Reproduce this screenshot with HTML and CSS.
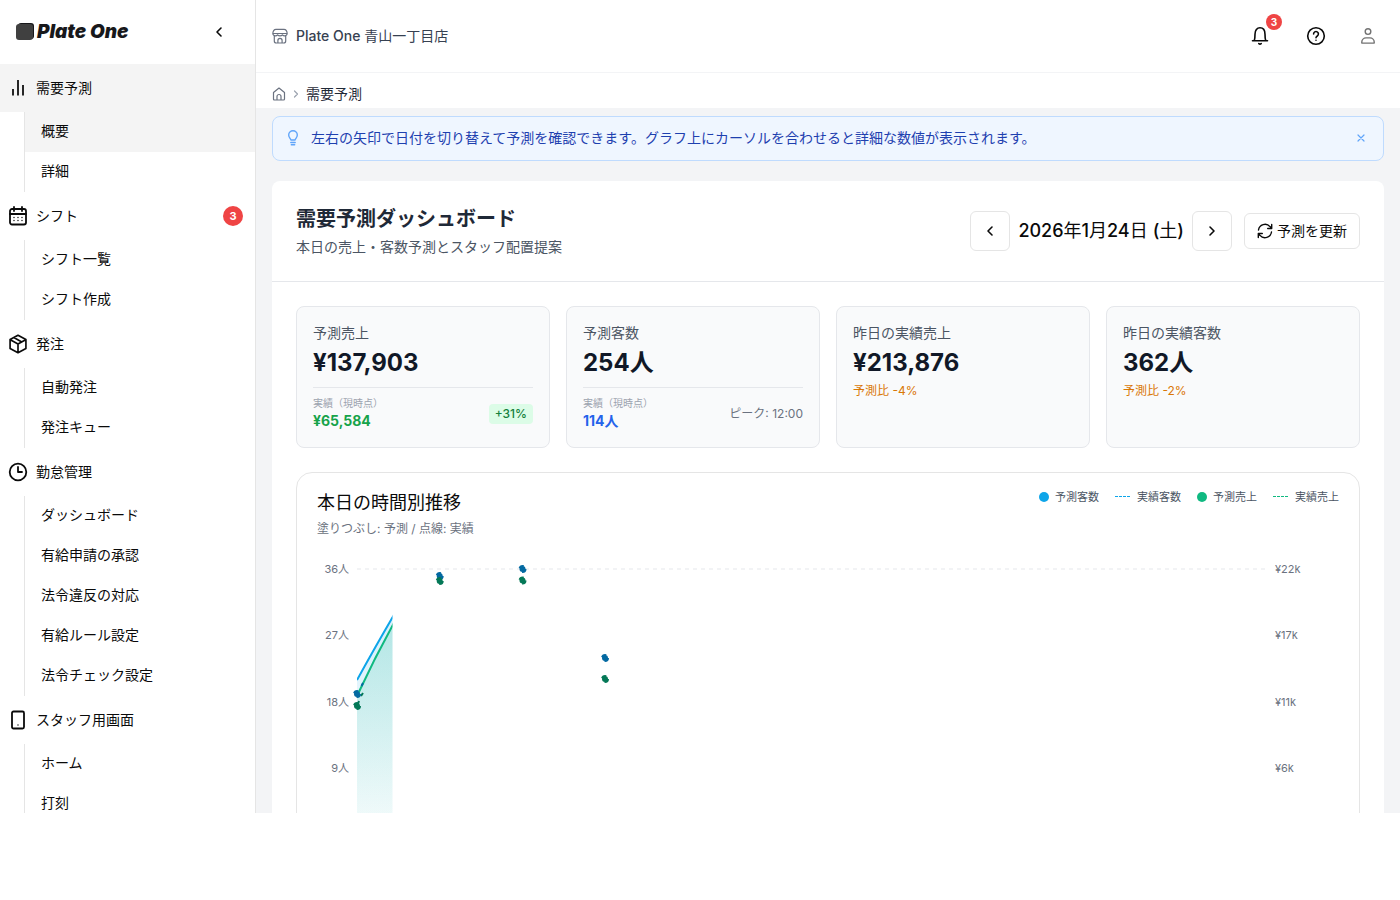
FILE: index.html
```html
<!DOCTYPE html>
<html lang="ja">
<head>
    <meta charset="UTF-8">
    <meta name="viewport" content="width=device-width, initial-scale=1.0">
    <title>需要予測 | Plate One</title>
    <link rel="stylesheet" href="styles.css">
</head>
<body>
<div class="app">
    <aside class="sidebar">
        <div class="sidebar-header">
            <a class="logo" href="#">
                <svg width="19" height="18" viewBox="0 0 19 18" aria-hidden="true">
                    <rect x="2" y="0" width="16" height="16" rx="3" fill="#18181b"/>
                    <rect x="0" y="1" width="17" height="16" rx="3" fill="#404040"/>
                </svg>
                <span>Plate One</span>
            </a>
            <button class="collapse" type="button" aria-label="メニューを閉じる">
                <svg class="icon" width="16" height="16" viewBox="0 0 16 16"><path d="M10 4 6 8l4 4"/></svg>
            </button>
        </div>
        <nav class="nav">
            <a class="nav-item active" href="#">
                <svg class="icon bars" width="20" height="20" viewBox="0 0 20 20"><path d="M5 11v6.500M10 2v15.500M15 7v10.500"/></svg>
                <span>需要予測</span>
            </a>
            <div class="nav-sub">
                <a class="active" href="#">概要</a>
                <a href="#">詳細</a>
            </div>
            <a class="nav-item" href="#">
                <svg class="icon" width="20" height="20" viewBox="0 0 20 20"><rect x="2" y="3" width="16" height="15.500" rx="2"/><path d="M2 8h16M6 1v4M14 1v4"/><path class="dots" d="M6 11.500h0M10 11.500h0M14 11.500h0M6 14.500h0M10 14.500h0M14 14.500h0"/></svg>
                <span>シフト</span>
                <span class="count">3</span>
            </a>
            <div class="nav-sub">
                <a href="#">シフト一覧</a>
                <a href="#">シフト作成</a>
            </div>
            <a class="nav-item" href="#">
                <svg class="icon box" width="20" height="20" viewBox="0 0 24 24"><path d="M12 1.500 21.500 6.700v10.600L12 22.500 2.500 17.300V6.700zM2.800 6.900 12 12l9.200-5.100M12 12v10.300M7 4.300l9.500 5.200"/></svg>
                <span>発注</span>
            </a>
            <div class="nav-sub">
                <a href="#">自動発注</a>
                <a href="#">発注キュー</a>
            </div>
            <a class="nav-item" href="#">
                <svg class="icon" width="20" height="20" viewBox="0 0 20 20"><circle cx="10" cy="10" r="8.300"/><path d="M10 5v5h4"/></svg>
                <span>勤怠管理</span>
            </a>
            <div class="nav-sub">
                <a href="#">ダッシュボード</a>
                <a href="#">有給申請の承認</a>
                <a href="#">法令違反の対応</a>
                <a href="#">有給ルール設定</a>
                <a href="#">法令チェック設定</a>
            </div>
            <a class="nav-item" href="#">
                <svg class="icon" width="20" height="20" viewBox="0 0 20 20"><rect x="4" y="1.500" width="12" height="17" rx="1.500"/><path class="dots" d="M10 15h0"/></svg>
                <span>スタッフ用画面</span>
            </a>
            <div class="nav-sub">
                <a href="#">ホーム</a>
                <a href="#">打刻</a>
            </div>
        </nav>
    </aside>

    <div class="content">
        <header class="topbar">
            <div class="store">
                <svg class="icon thin" width="16" height="16" viewBox="0 0 16 16"><path d="M.8 5.500C1 3 2 1.300 4 1.300h8c2 0 3 1.700 3.200 4.200zM.8 5.500q.3 2.300 2.400 2.300 1.700 0 2.400-1 .9 1 2.400 1t2.400-1q.7 1 2.400 1 2.100 0 2.400-2.300M2.300 7.800V13q0 2 2 2h7.400q2 0 2-2V7.800M5.900 15v-2.500a2.100 2.100 0 0 1 4.200 0V15"/></svg>
                <span><b>Plate One</b> 青山一丁目店</span>
            </div>
            <div class="actions">
                <button class="action" type="button" aria-label="通知">
                    <svg class="icon" width="20" height="20" viewBox="0 0 20 20"><path d="M2.500 14.700h15M4.300 14.500c.6-1.800.7-3 .7-6.200C5 4.300 7 1.800 10 1.800s5 2.500 5 6.500c0 3.200.1 4.400.7 6.200M8.800 17.600q1.200 1 2.400 0"/></svg>
                    <span class="action-count">3</span>
                </button>
                <button class="action" type="button" aria-label="ヘルプ">
                    <svg class="icon" width="20" height="20" viewBox="0 0 20 20"><circle cx="10" cy="10" r="8.300"/><path d="M7.600 8a2.400 2.400 0 1 1 3.700 2c-.9.600-1.300 1-1.300 1.700M10 14.200h0"/></svg>
                </button>
                <button class="action user" type="button" aria-label="アカウント">
                    <svg class="icon medium" width="20" height="20" viewBox="0 0 20 20"><circle cx="10" cy="5.600" r="2.800"/><path d="M3.800 17.100v-1a4.200 4.200 0 0 1 4.200-4.200h4a4.200 4.200 0 0 1 4.200 4.200v1z"/></svg>
                </button>
            </div>
        </header>
        <nav class="breadcrumb" aria-label="パンくず">
            <a href="#" aria-label="ホーム"><svg class="icon thin" width="14" height="14" viewBox="0 0 14 14"><path d="M1.500 5.500 7 1l5.500 4.500V12q0 1-1 1h-9q-1 0-1-1zM5 13V9.500a2 2 0 0 1 4 0V13"/></svg></a>
            <svg class="icon thin separator" width="12" height="12" viewBox="0 0 12 12"><path d="m4.500 3 3 3-3 3"/></svg>
            <span>需要予測</span>
        </nav>

        <main class="main">
            <div class="notice">
                <svg class="icon medium" width="16" height="16" viewBox="0 0 16 16"><path d="M5.900 10C5.700 8.500 3.700 7.600 3.700 5a4.300 4.300 0 0 1 8.600 0c0 2.600-2 3.500-2.200 5zM5.800 12.500h4.400M6.300 14.700h3.400"/></svg>
                <p>左右の矢印で日付を切り替えて予測を確認できます。グラフ上にカーソルを合わせると詳細な数値が表示されます。</p>
                <button type="button" aria-label="閉じる">
                    <svg class="icon thin" width="12" height="12" viewBox="0 0 12 12"><path d="m3 3 6 6M9 3 3 9"/></svg>
                </button>
            </div>

            <section class="panel">
                <div class="panel-header">
                    <div>
                        <h1>需要予測ダッシュボード</h1>
                        <p>本日の売上・客数予測とスタッフ配置提案</p>
                    </div>
                    <div class="controls">
                        <div class="date-nav">
                            <button class="square" type="button" aria-label="前日">
                                <svg class="icon" width="16" height="16" viewBox="0 0 16 16"><path d="M10 4 6 8l4 4"/></svg>
                            </button>
                            <span class="date"><b>2026</b>年<b>1</b>月<b>24</b>日 <b>(</b>土<b>)</b></span>
                            <button class="square" type="button" aria-label="翌日">
                                <svg class="icon" width="16" height="16" viewBox="0 0 16 16"><path d="m6 4 4 4-4 4"/></svg>
                            </button>
                        </div>
                        <button class="refresh" type="button">
                            <svg class="icon medium" width="16" height="16" viewBox="0 0 16 16"><path d="M1.500 7A6.600 6.600 0 0 1 13 3.600L14.600 5.300M14.700 1.500v4h-4M14.500 9A6.600 6.600 0 0 1 3 12.400L1.400 10.700M1.300 14.500v-4h4"/></svg>
                            予測を更新
                        </button>
                    </div>
                </div>

                <div class="panel-body">
                    <div class="kpis">
                        <div class="kpi">
                            <div class="kpi-label">予測売上</div>
                            <div class="kpi-value">¥137,903</div>
                            <div class="kpi-actual">
                                <div>
                                    <div class="actual-label">実績（現時点）</div>
                                    <div class="actual-value green">¥65,584</div>
                                </div>
                                <span class="tag">+31%</span>
                            </div>
                        </div>
                        <div class="kpi">
                            <div class="kpi-label">予測客数</div>
                            <div class="kpi-value">254人</div>
                            <div class="kpi-actual">
                                <div>
                                    <div class="actual-label">実績（現時点）</div>
                                    <div class="actual-value blue">114人</div>
                                </div>
                                <span class="peak">ピーク: 12:00</span>
                            </div>
                        </div>
                        <div class="kpi">
                            <div class="kpi-label">昨日の実績売上</div>
                            <div class="kpi-value">¥213,876</div>
                            <div class="kpi-diff">予測比 -4%</div>
                        </div>
                        <div class="kpi">
                            <div class="kpi-label">昨日の実績客数</div>
                            <div class="kpi-value">362人</div>
                            <div class="kpi-diff">予測比 -2%</div>
                        </div>
                    </div>

                    <section class="chart-card">
                        <div class="chart-header">
                            <div>
                                <h2>本日の時間別推移</h2>
                                <p>塗りつぶし: 予測 / 点線: 実績</p>
                            </div>
                            <ul class="legend">
                                <li><span class="dot sky"></span>予測客数</li>
                                <li><svg width="16" height="2" viewBox="0 0 16 2"><path d="M0 .5h16" stroke="#0ea5e9" stroke-dasharray="3 1"/></svg>実績客数</li>
                                <li><span class="dot emerald"></span>予測売上</li>
                                <li><svg width="16" height="2" viewBox="0 0 16 2"><path d="M0 .5h16" stroke="#10b981" stroke-dasharray="3 1"/></svg>実績売上</li>
                            </ul>
                        </div>
                        <svg class="chart" viewBox="0 0 1022 320" role="img" aria-label="時間別の客数と売上">
                            <defs>
                                <linearGradient id="fillGuests" gradientUnits="userSpaceOnUse" x1="0" y1="20" x2="0" y2="285">
                                    <stop offset="0" stop-color="#0ea5e9" stop-opacity=".2"/>
                                    <stop offset="1" stop-color="#0ea5e9" stop-opacity=".02"/>
                                </linearGradient>
                                <linearGradient id="fillSales" gradientUnits="userSpaceOnUse" x1="0" y1="20" x2="0" y2="285">
                                    <stop offset="0" stop-color="#10b981" stop-opacity=".22"/>
                                    <stop offset="1" stop-color="#10b981" stop-opacity=".02"/>
                                </linearGradient>
                                <clipPath id="reveal"><rect x="40" y="0" width="35.500" height="320"/></clipPath>
                            </defs>
                            <path class="grid-line" d="M40 20h910"/>
                            <g class="axis" text-anchor="end">
                                <text x="32" y="24">36人</text>
                                <text x="32" y="90">27人</text>
                                <text x="32" y="157">18人</text>
                                <text x="32" y="223">9人</text>
                            </g>
                            <g class="axis">
                                <text x="958" y="24">¥22k</text>
                                <text x="958" y="90">¥17k</text>
                                <text x="958" y="157">¥11k</text>
                                <text x="958" y="223">¥6k</text>
                            </g>
                            <g clip-path="url(#reveal)">
                                <path d="M40 131Q57 100 78 64V285H40z" fill="url(#fillGuests)"/>
                                <path d="M40 131Q57 100 78 64" class="line guests"/>
                                <path d="M40 147Q58 108 78 72V285H40z" fill="url(#fillSales)"/>
                                <path d="M40 147Q58 108 78 72" class="line sales"/>
                            </g>
                            <path class="line guests-dark" d="m44.500 137 1.500-3"/>
                            <path class="line sales-dark" d="m41 155 1-3M44 147l2-3"/>
                            <g class="points guests-dark">
                                <circle cx="40" cy="145" r="3"/>
                                <circle cx="122.700" cy="27" r="3"/>
                                <circle cx="205.500" cy="20" r="3"/>
                                <circle cx="288" cy="109" r="3"/>
                            </g>
                            <g class="points sales-dark">
                                <circle cx="40" cy="157" r="3"/>
                                <circle cx="122.700" cy="32" r="3"/>
                                <circle cx="205.500" cy="31.500" r="3"/>
                                <circle cx="288" cy="130" r="3"/>
                            </g>
                        </svg>
                    </section>
                </div>
            </section>
        </main>
    </div>
</div>
</body>
</html>
```
FILE: styles.css
```css
* {
    box-sizing: border-box;
    margin: 0;
    padding: 0;
}
body {
    height: 100vh;
    padding-bottom: 87px;
    font-family: Inter, "Noto Sans CJK JP", sans-serif;
    font-size: 14px;
    line-height: 20px;
    color: #0a0a0a;
    background-color: #fff;
    overflow: hidden;
}
a {
    color: inherit;
    text-decoration: none;
}
b {
    font-weight: 500;
}
button {
    display: flex;
    align-items: center;
    justify-content: center;
    font: inherit;
    color: inherit;
    background: none;
    border: none;
    cursor: pointer;
}
svg {
    flex-shrink: 0;
    display: block;
}
.icon {
    fill: none;
    stroke: currentColor;
    stroke-width: 1.6;
    stroke-linecap: round;
    stroke-linejoin: round;
}
.icon.medium {
    stroke-width: 1.4;
}
.icon.thin {
    stroke-width: 1.2;
}
.app {
    display: flex;
    height: 100%;
    overflow: hidden;
}

/* Sidebar */
.sidebar {
    display: flex;
    flex-direction: column;
    flex: 0 0 256px;
    border-right: 1px solid #e5e5e5;
    overflow: hidden;
}
.sidebar-header {
    display: flex;
    align-items: center;
    justify-content: space-between;
    flex: 0 0 64px;
    padding: 0 20px 0 16px;
}
.logo {
    display: flex;
    align-items: center;
    gap: 2px;
    font-size: 19px;
    font-weight: 900;
    font-style: italic;
    color: #18181b;
}
.collapse {
    width: 32px;
    height: 32px;
}
.nav {
    flex: 1;
    overflow: hidden;
}
.nav-item {
    display: flex;
    align-items: center;
    gap: 8px;
    height: 48px;
    padding: 0 12px 0 8px;
}
.nav-item .icon {
    stroke-width: 1.8;
}
.nav-item .bars {
    stroke-width: 2;
    stroke-linecap: butt;
    color: #262626;
}
.nav-item .box {
    stroke-width: 2;
}
.nav-item .dots {
    stroke-width: 1.4;
}
.nav-item.active,
.nav-sub .active {
    background-color: #f4f4f4;
}
.count {
    width: 20px;
    height: 20px;
    margin-left: auto;
    border-radius: 50%;
    font-size: 11px;
    font-weight: 700;
    text-align: center;
    color: #fff;
    background-color: #ef4444;
}
.nav-sub {
    margin-left: 24px;
    border-left: 1px solid #e5e5e5;
}
.nav-sub a {
    display: block;
    padding: 9px 16px 11px;
}

/* Header */
.content {
    display: flex;
    flex-direction: column;
    flex: 1;
    min-width: 0;
    background-color: #f3f4f6;
}
.topbar {
    display: flex;
    align-items: center;
    justify-content: space-between;
    flex: 0 0 73px;
    padding: 0 16px;
    border-bottom: 1px solid #f3f4f6;
    background-color: #fff;
}
.store {
    display: flex;
    align-items: center;
    gap: 8px;
    color: #374151;
}
.store .icon {
    color: #6b7280;
}
.actions {
    display: flex;
    gap: 16px;
}
.action {
    position: relative;
    width: 40px;
    height: 40px;
}
.action.user {
    width: 32px;
    color: #737373;
}
.action-count {
    position: absolute;
    top: -2px;
    right: -2px;
    width: 16px;
    height: 16px;
    border-radius: 50%;
    font-size: 10px;
    line-height: 16px;
    font-weight: 700;
    color: #fff;
    background-color: #ef4444;
}
.breadcrumb {
    display: flex;
    align-items: center;
    gap: 4px;
    flex: 0 0 35px;
    padding: 6px 16px 0;
    color: #1f2937;
    background-color: #fff;
}
.breadcrumb a {
    color: #6b7280;
}
.separator {
    color: #9ca3af;
}

/* Main */
.main {
    flex: 1;
    padding: 8px 16px;
    overflow: hidden;
}
.notice {
    display: flex;
    align-items: center;
    gap: 10px;
    margin-bottom: 20px;
    padding: 10px 16px 12px 12px;
    border: 1px solid #bfdbfe;
    border-radius: 8px;
    line-height: 21px;
    color: #1e40af;
    background-color: #eff6ff;
}
.notice p {
    flex: 1;
}
.notice .icon {
    color: #60a5fa;
}
.panel {
    border-radius: 8px;
    background-color: #fff;
}
.panel-header {
    display: flex;
    align-items: center;
    justify-content: space-between;
    padding: 24px;
    border-bottom: 1px solid #e5e7eb;
}
.panel-header h1 {
    font-size: 20px;
    line-height: 28px;
    font-weight: 700;
    color: #1f2937;
}
.panel-header p {
    margin-top: 4px;
    color: #4b5563;
}
.controls {
    display: flex;
    align-items: center;
    gap: 12px;
}
.date-nav {
    display: flex;
    align-items: center;
    gap: 8px;
}
.date {
    font-size: 18px;
    line-height: 28px;
}
.square,
.refresh {
    border: 1px solid #e5e5e5;
    border-radius: 6px;
    background-color: #fff;
}
.square {
    width: 40px;
    height: 40px;
}
.refresh {
    gap: 4px;
    height: 36px;
    padding: 0 12px;
}
.panel-body {
    padding: 24px;
}

/* KPI cards */
.kpis {
    display: grid;
    grid-template-columns: repeat(4, 1fr);
    gap: 16px;
    margin-bottom: 24px;
}
.kpi {
    padding: 16px;
    border: 1px solid #e5e7eb;
    border-radius: 8px;
    background-color: #f9fafb;
}
.kpi-label {
    margin-bottom: 4px;
    color: #4b5563;
}
.kpi-value {
    font-size: 24px;
    line-height: 32px;
    font-weight: 700;
    color: #111827;
}
.kpi-actual {
    display: flex;
    align-items: center;
    justify-content: space-between;
    margin-top: 8px;
    padding-top: 8px;
    border-top: 1px solid #e5e7eb;
}
.actual-label {
    font-size: 10px;
    line-height: 15px;
    color: #9ca3af;
}
.actual-value {
    font-weight: 700;
}
.green {
    color: #16a34a;
}
.blue {
    color: #2563eb;
}
.tag {
    padding: 2px 6px;
    border-radius: 4px;
    font-size: 12px;
    line-height: 16px;
    font-weight: 500;
    color: #15803d;
    background-color: #dcfce7;
}
.peak {
    font-size: 12px;
    color: #6b7280;
}
.kpi-diff {
    margin-top: 4px;
    font-size: 12px;
    line-height: 16px;
    color: #d97706;
}

/* Hourly chart */
.chart-card {
    padding: 16px 20px;
    border: 1px solid #e5e5e5;
    border-radius: 16px;
}
.chart-header {
    display: flex;
    align-items: flex-start;
    justify-content: space-between;
    margin-bottom: 12px;
}
.chart-header h2 {
    font-size: 18px;
    line-height: 28px;
    font-weight: 400;
}
.chart-header p {
    margin-top: 4px;
    font-size: 12px;
    line-height: 16px;
    color: #6b7280;
}
.legend {
    display: flex;
    gap: 16px;
    list-style: none;
    font-size: 11px;
    line-height: 16px;
    color: #4b5563;
}
.legend li {
    display: flex;
    align-items: center;
    gap: 6px;
}
.dot {
    width: 10px;
    height: 10px;
    border-radius: 50%;
}
.sky {
    background-color: #0ea5e9;
}
.emerald {
    background-color: #10b981;
}
.chart {
    width: 100%;
}
.grid-line {
    stroke: #e5e7eb;
    stroke-dasharray: 4 4;
}
.axis {
    font-size: 11px;
    fill: #6b7280;
}
.line {
    fill: none;
    stroke-width: 2;
}
.guests {
    stroke: #0ea5e9;
}
.sales {
    stroke: #10b981;
}
.guests-dark {
    stroke: #0369a1;
}
.sales-dark {
    stroke: #047857;
}
.points {
    stroke-width: 2;
    stroke-dasharray: 5 5;
}
.points.guests-dark {
    fill: #0369a1;
}
.points.sales-dark {
    fill: #047857;
}
```
